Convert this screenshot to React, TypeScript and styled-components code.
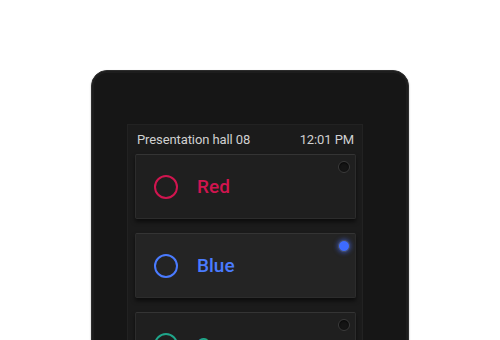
import styled, { createGlobalStyle } from 'styled-components'

const Global = createGlobalStyle`
  html, body {
    margin: 0;
    padding: 0;
    background: #ffffff;
    overflow: hidden;
  }
  body {
    font-family: Roboto, 'Liberation Sans', sans-serif;
  }
`

const Stage = styled.div`
  width: 500px;
  height: 340px;
  padding: 70px 0 0 91px;
  box-sizing: border-box;
  overflow: hidden;
`

const Device = styled.div`
  width: 318px;
  height: 300px;
  box-sizing: border-box;
  padding: 53px 45px 0 35px;
  border-radius: 16px;
  background: #161616;
  border: 1px solid #2d2d2d;
  box-shadow: inset 0 0 0 2px #1d1d1d, 0 1px 2px rgba(0, 0, 0, 0.3);
  overflow: hidden;
`

const Screen = styled.div`
  height: 100%;
  background: #1b1b1b;
  box-shadow: inset 0 0 0 1px #222;
  padding: 0 7px 0 8px;
  display: flex;
  flex-direction: column;
`

const Header = styled.div`
  flex-shrink: 0;
  height: 30px;
  display: flex;
  align-items: center;
  justify-content: space-between;
  padding: 0 2px 0 2px;
  color: #d0d0d0;
  font-size: 13px;
  letter-spacing: -0.1px;
`

const List = styled.div`
  flex-shrink: 0;
  display: flex;
  flex-direction: column;
  gap: 14px;
`

const Button = styled.div<{ $active?: boolean }>`
  position: relative;
  height: 65px;
  box-sizing: border-box;
  display: flex;
  align-items: center;
  gap: 19px;
  padding: 0 0 0 18px;
  border-radius: 2px;
  background: ${({ $active }) => ($active ? '#242424' : '#1f1f1f')};
  border: 1px solid #2c2c2c;
  border-top-color: #343434;
  box-shadow: 0 3px 4px rgba(0, 0, 0, 0.55);
`

const Ring = styled.div<{ $color: string }>`
  width: 20px;
  height: 20px;
  border-radius: 50%;
  border: 2.5px solid ${({ $color }) => $color};
`

const Label = styled.span<{ $color: string }>`
  color: ${({ $color }) => $color};
  font-size: 19px;
  font-weight: 500;
`

const Led = styled.div<{ $on?: boolean }>`
  position: absolute;
  top: 6px;
  right: 5px;
  width: 10px;
  height: 10px;
  border-radius: 50%;
  background: ${({ $on }) => ($on ? '#3d6bff' : '#151515')};
  border: 1.5px solid ${({ $on }) => ($on ? '#4b4f5c' : '#3a3a3a')};
  box-shadow: ${({ $on }) =>
    $on ? '0 0 4px 1px rgba(70, 110, 255, 0.5)' : 'inset 0 1px 2px rgba(0,0,0,0.8)'};
`

const items = [
  { name: 'Red', color: '#d0154f', on: false },
  { name: 'Blue', color: '#4a7bff', on: true },
  { name: 'Green', color: '#1fa58a', on: false },
]

export default function App() {
  return (
    <Stage>
      <Global />
      <Device>
        <Screen>
          <Header>
            <span>Presentation hall 08</span>
            <span>12:01 PM</span>
          </Header>
          <List>
            {items.map((it) => (
              <Button key={it.name} $active={it.on}>
                <Ring $color={it.color} />
                <Label $color={it.color}>{it.name}</Label>
                <Led $on={it.on} />
              </Button>
            ))}
          </List>
        </Screen>
      </Device>
    </Stage>
  )
}
